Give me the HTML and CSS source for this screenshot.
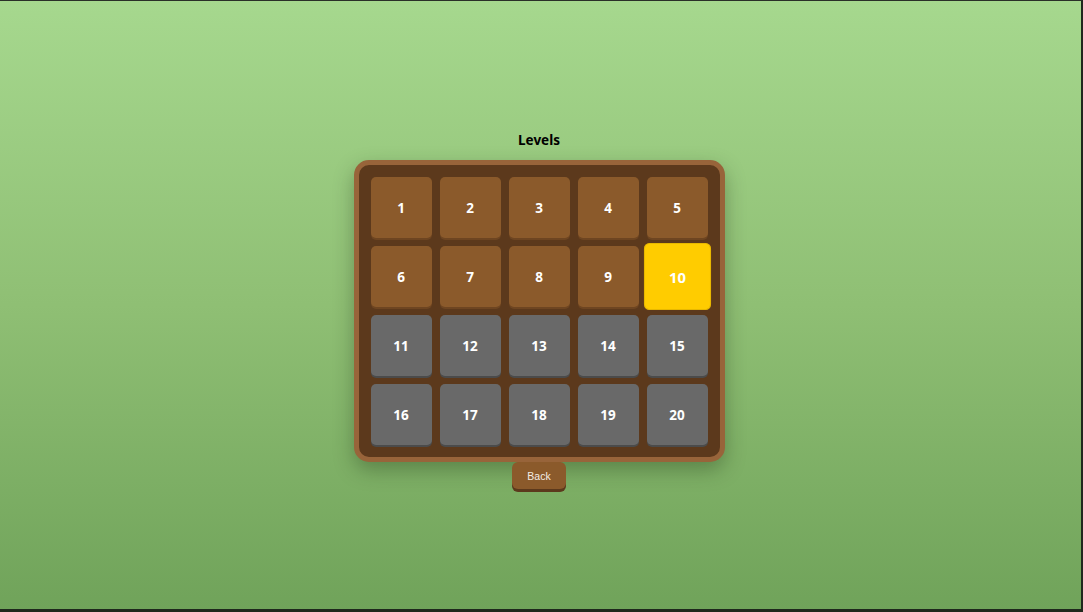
FILE: index.html
```html
<!DOCTYPE html>
<html>
<head>
<meta charset="utf-8">
<link rel="stylesheet" href="styles.css">
</head>
<body>
<div class="frame">
  <main class="screen">
    <h2 class="title">Levels</h2>
    <div class="panel">
      <div class="grid">
        <button class="cell open">1</button>
        <button class="cell open">2</button>
        <button class="cell open">3</button>
        <button class="cell open">4</button>
        <button class="cell open">5</button>
        <button class="cell open">6</button>
        <button class="cell open">7</button>
        <button class="cell open">8</button>
        <button class="cell open">9</button>
        <button class="cell current">10</button>
        <button class="cell locked">11</button>
        <button class="cell locked">12</button>
        <button class="cell locked">13</button>
        <button class="cell locked">14</button>
        <button class="cell locked">15</button>
        <button class="cell locked">16</button>
        <button class="cell locked">17</button>
        <button class="cell locked">18</button>
        <button class="cell locked">19</button>
        <button class="cell locked">20</button>
      </div>
    </div>
    <button class="back">Back</button>
  </main>
</div>
</body>
</html>
```
FILE: styles.css
```css
html, body {
  margin: 0;
  padding: 0;
  background: #1f281d;
}
.frame {
  box-sizing: border-box;
  width: 1083px;
  height: 612px;
  border-top: 1px solid #2a2f28;
  border-right: 2px solid #1f281d;
  border-bottom: 3px solid #1f281d;
}
.screen {
  height: 100%;
  background: linear-gradient(180deg, #a6d88e 0%, #8fbf74 50%, #70a35a 100%);
  display: flex;
  flex-direction: column;
  align-items: center;
  padding-top: 130px;
  padding-right: 3px;
  box-sizing: border-box;
  font-family: "Noto Sans", "Open Sans", sans-serif;
}
.title {
  margin: 0 0 10px 0;
  font-size: 13.5px;
  line-height: 19px;
  font-weight: 700;
  color: #000;
}
.panel {
  background: #5c391c;
  border: 5px solid #98643a;
  border-radius: 15px;
  padding: 12px;
  box-shadow: 0 8px 20px rgba(30, 50, 20, 0.35);
}
.grid {
  display: grid;
  grid-template-columns: repeat(5, 61px);
  grid-auto-rows: 61px;
  gap: 8px;
}
.cell {
  border: none;
  border-radius: 5px;
  font-family: "Noto Sans", "Open Sans", sans-serif;
  font-weight: 700;
  font-size: 13.5px;
  color: #fff;
  padding: 0;
  cursor: pointer;
}
.open {
  background: #8b5a2b;
  box-shadow: 0 2px 0 #6e4521;
}
.locked {
  background: #696969;
  box-shadow: 0 2px 0 #4b4b4b;
}
.current {
  background: #ffcc00;
  border: 1px solid #e8b800;
  transform: scale(1.1);
  box-shadow: none;
}
.back {
  background: #8b5a2b;
  color: #f3ece4;
  border: none;
  border-radius: 6px;
  box-shadow: 0 3px 0 #5c391c;
  font-family: "Liberation Sans", Arial, sans-serif;
  font-size: 10.5px;
  width: 54px;
  height: 27px;
  padding: 0;
  margin-top: 0;
}
```
